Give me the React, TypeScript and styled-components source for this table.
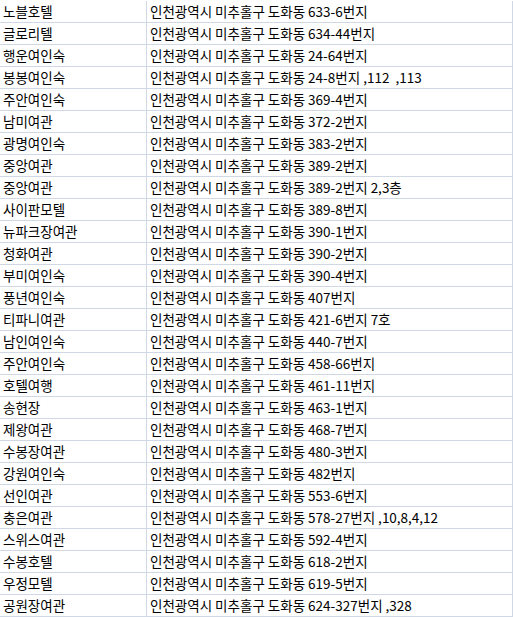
import styled, { createGlobalStyle } from 'styled-components';

const GlobalStyle = createGlobalStyle`
    html, body {
        margin: 0;
        padding: 0;
        background: #ffffff;
    }
    body {
        font-family: "Noto Sans CJK KR", "Noto Sans", sans-serif;
        font-size: 13.5px;
        color: #000000;
    }
`

const Sheet = styled.div`
    width: 513px;
    padding-top: 1px;
    background: #ffffff;
`

const Row = styled.div`
    display: grid;
    grid-template-columns: 147px 366px;
    height: 22px;
    box-sizing: border-box;
    border-bottom: 1px solid #d0d7e5;
`

const Cell = styled.div<{ $pad?: number }>`
    box-sizing: border-box;
    border-right: 1px solid #d0d7e5;
    padding-left: ${props => props.$pad ?? 3}px;
    line-height: 21px;
    white-space: pre;
    overflow: hidden;
`

interface Lodging {
    name: string,
    addr: string
}

const BASE = '인천광역시 미추홀구 도화동 ';

const rows: Lodging[] = [
    { name: '노블호텔', addr: '633-6번지' },
    { name: '글로리텔', addr: '634-44번지' },
    { name: '행운여인숙', addr: '24-64번지' },
    { name: '봉봉여인숙', addr: '24-8번지 ,112  ,113' },
    { name: '주안여인숙', addr: '369-4번지' },
    { name: '남미여관', addr: '372-2번지' },
    { name: '광명여인숙', addr: '383-2번지' },
    { name: '중앙여관', addr: '389-2번지' },
    { name: '중앙여관', addr: '389-2번지 2,3층' },
    { name: '사이판모텔', addr: '389-8번지' },
    { name: '뉴파크장여관', addr: '390-1번지' },
    { name: '청화여관', addr: '390-2번지' },
    { name: '부미여인숙', addr: '390-4번지' },
    { name: '풍년여인숙', addr: '407번지' },
    { name: '티파니여관', addr: '421-6번지 7호' },
    { name: '남인여인숙', addr: '440-7번지' },
    { name: '주안여인숙', addr: '458-66번지' },
    { name: '호텔여행', addr: '461-11번지' },
    { name: '송현장', addr: '463-1번지' },
    { name: '제왕여관', addr: '468-7번지' },
    { name: '수봉장여관', addr: '480-3번지' },
    { name: '강원여인숙', addr: '482번지' },
    { name: '선인여관', addr: '553-6번지' },
    { name: '충은여관', addr: '578-27번지 ,10,8,4,12' },
    { name: '스위스여관', addr: '592-4번지' },
    { name: '수봉호텔', addr: '618-2번지' },
    { name: '우정모텔', addr: '619-5번지' },
    { name: '공원장여관', addr: '624-327번지 ,328' },
];

export default function App(){
    return(
        <>
            <GlobalStyle />
            <Sheet>
                {rows.map((row, i) => (
                    <Row key={i}>
                        <Cell>{row.name}</Cell>
                        <Cell>{BASE + row.addr}</Cell>
                    </Row>
                ))}
            </Sheet>
        </>
    )
}
